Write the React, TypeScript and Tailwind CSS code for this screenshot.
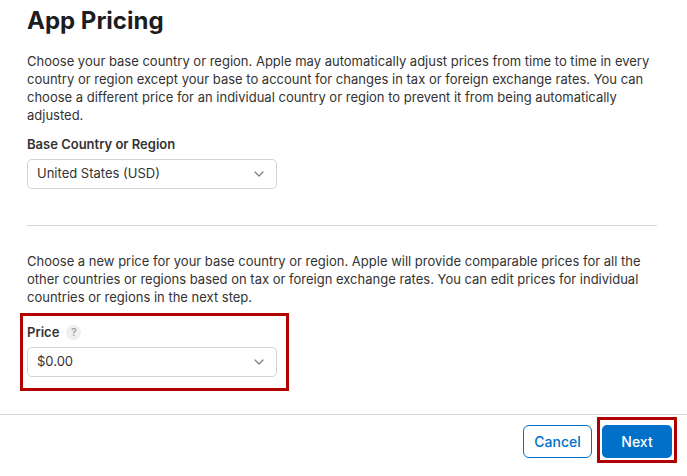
import React from "react";

function Chevron() {
  return (
    <svg width="10" height="6" viewBox="0 0 10 6" fill="none">
      <path d="M1 1l4 4 4-4" stroke="#7d7d7d" strokeWidth="1.2" strokeLinecap="round" strokeLinejoin="round" />
    </svg>
  );
}

function SelectBox({ value }: { value: string }) {
  return (
    <div className="flex h-[30px] w-[250px] items-center justify-between rounded-[5px] border border-[#d2d2d7] bg-white pl-[9px] pr-[12px] text-[13px] text-[#333]">
      <span>{value}</span>
      <Chevron />
    </div>
  );
}

export default function App() {
  return (
    <div className="min-h-[476px] w-full bg-white font-['Inter','Liberation_Sans',sans-serif] text-[#333]">
      <div className="pl-[27px] pr-[30px] pt-[5px]">
        <h1 className="text-[24px] font-bold leading-8 text-[#1d1d1f]">App Pricing</h1>

        <p className="mt-[15px] text-[13px] leading-[18px]">
          Choose your base country or region. Apple may automatically adjust prices from time to time in every
          country or region except your base to account for changes in tax or foreign exchange rates. You can
          choose a different price for an individual country or region to prevent it from being automatically
          adjusted.
        </p>

        <div className="mt-[11px] text-[13px] font-semibold leading-[18px]">Base Country or Region</div>
        <div className="mt-[6px]">
          <SelectBox value="United States (USD)" />
        </div>

        <div className="mt-[36px] h-px bg-[#d6d6d6]" />

        <p className="mt-[26px] text-[13px] leading-[18px]">
          Choose a new price for your base country or region. Apple will provide comparable prices for all the
          other countries or regions based on tax or foreign exchange rates. You can edit prices for individual
          countries or regions in the next step.
        </p>

        <div className="-ml-[7px] mt-[7px] w-[269px] border-[3px] border-[#b00000] pb-[11px] pl-[4px] pt-[7px]">
          <div className="flex items-center gap-[7px] text-[13px] font-semibold leading-[18px]">
            Price
            <span className="flex h-[15px] w-[15px] items-center justify-center rounded-full bg-[#efefef] text-[11px] font-medium text-[#9a9a9a]">
              ?
            </span>
          </div>
          <div className="mt-[6px]">
            <SelectBox value="$0.00" />
          </div>
        </div>
      </div>

      <div className="mt-[23px] flex justify-end gap-[10px] border-t border-[#d6d6d6] pr-[15px] pt-[10px]">
        <button className="h-[33px] w-[69px] rounded-[6px] border border-[#0070c9] bg-white text-[14px] font-medium text-[#0070c9]">
          Cancel
        </button>
        <div className="relative">
          <button className="h-[33px] w-[70px] rounded-[5px] bg-[#0070c9] text-[14px] font-medium text-white">
            Next
          </button>
          <div className="pointer-events-none absolute -bottom-[5px] -left-[5px] -right-[5px] -top-[8px] border-[3px] border-[#b00000]" />
        </div>
      </div>
    </div>
  );
}
